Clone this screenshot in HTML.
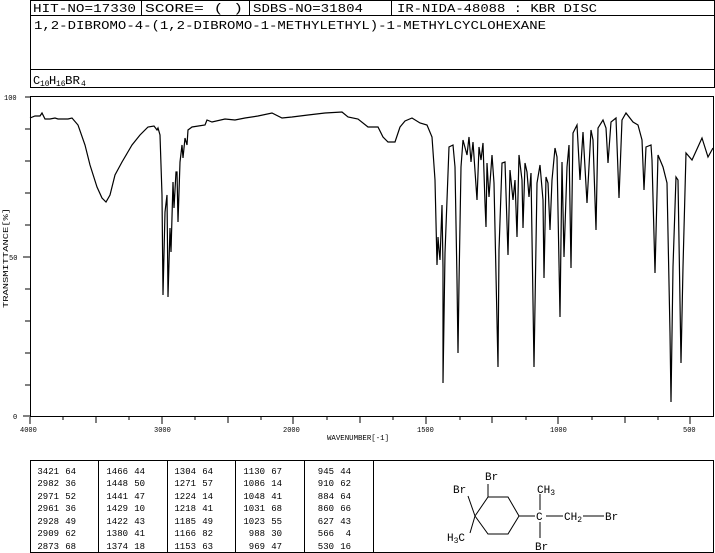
<!DOCTYPE html>
<html><head><meta charset="utf-8"><style>
html,body{margin:0;padding:0;background:#fff;width:715px;height:553px;overflow:hidden}
svg{display:block}
text{font-family:"Liberation Mono",monospace;fill:#000}
</style></head><body>
<svg width="715" height="553" viewBox="0 0 715 553" xmlns="http://www.w3.org/2000/svg">
<g fill="none" stroke="#000" stroke-width="1">
<rect x="30.5" y="0.5" width="684" height="87"/>
<line x1="30" y1="15.5" x2="715" y2="15.5"/>
<line x1="30" y1="69.5" x2="715" y2="69.5"/>
<line x1="141.5" y1="0" x2="141.5" y2="15"/>
<line x1="249.5" y1="0" x2="249.5" y2="15"/>
<line x1="391.5" y1="0" x2="391.5" y2="15"/>
</g>
<g font-size="12">
<text x="33" y="12" textLength="103" lengthAdjust="spacingAndGlyphs">HIT-NO=17330</text>
<text x="145" y="12" textLength="98" lengthAdjust="spacingAndGlyphs">SCORE=  (   )</text>
<text x="253" y="12" textLength="110" lengthAdjust="spacingAndGlyphs">SDBS-NO=31804</text>
<text x="397" y="12" textLength="200" lengthAdjust="spacingAndGlyphs">IR-NIDA-48088 : KBR DISC</text>
<text x="34" y="29" textLength="512" lengthAdjust="spacingAndGlyphs">1,2-DIBROMO-4-(1,2-DIBROMO-1-METHYLETHYL)-1-METHYLCYCLOHEXANE</text>
<text x="33" y="84">C</text><text x="40" y="86" font-size="8">10</text>
<text x="49" y="84">H</text><text x="56" y="86" font-size="8">16</text>
<text x="65" y="84" textLength="15" lengthAdjust="spacingAndGlyphs">BR</text><text x="81" y="86" font-size="8">4</text>
</g>
<g fill="none" stroke="#000" stroke-width="1">
<rect x="30.5" y="96.5" width="683" height="320"/>
<path d="M25 97H30M25 129H30M25 161H30M25 193H30M25 225H30M23 257H30M25 289H30M25 321H30M25 353H30M25 385H30M23 416H30"/>
<path d="M30 417V424M63 417V420M96 417V423M129 417V420M162 417V424M195 417V420M228 417V423M261 417V420M293 417V424M327 417V420M360 417V423M393 417V420M426 417V424M460 417V420M492 417V423M526 417V420M558 417V424M592 417V420M625 417V423M658 417V420M690 417V424"/>
</g>
<g font-size="7">
<text x="4" y="100">100</text><text x="9" y="260">50</text><text x="13" y="419">0</text>
<text x="20" y="432">4000</text><text x="154" y="432">3000</text><text x="283" y="432">2000</text>
<text x="417" y="432">1500</text><text x="550" y="432">1000</text><text x="683" y="432">500</text>
<text x="327" y="440" textLength="62" lengthAdjust="spacingAndGlyphs">WAVENUMBER[-1]</text>
<text transform="translate(8,258) rotate(-90)" text-anchor="middle" textLength="100" lengthAdjust="spacingAndGlyphs">TRANSMITTANCE[%]</text>
</g>
<polyline fill="none" stroke="#000" stroke-width="1.2" points="30,118 35,116 40,116 42,113 45,119 50,119 55,118 58,119 68,119 72,118 78,125 85,145 90,165 97,187 102,198 106,202 110,195 115,175 122,162 132,145 140,135 148,127 154,126 157,130 158,128 160,135 162,195 163,295 165,212 167,195 168,297 170,228 171,252 173,182 174,208 176,172 177,172 178,222 180,162 182,145 183,158 185,138 187,145 188,130 192,127 205,125 207,120 212,122 225,119 235,120 245,118 258,116 272,113 282,118 292,117 308,115 325,113 342,112 348,117 358,119 368,127 378,127 383,137 388,142 395,142 400,127 405,121 412,118 420,123 427,125 432,137 435,180 437,265 438,237 439,250 440,260 442,205 443,267 443,383 445,253 447,200 449,147 453,145 455,167 457,280 458,353 459,283 461,167 463,140 467,155 469,137 471,162 473,142 477,200 479,147 481,160 483,143 485,203 486,227 487,163 489,197 492,155 494,183 498,367 499,250 502,163 505,162 508,255 510,170 513,200 515,180 517,237 519,155 522,180 523,228 525,163 527,172 529,197 531,173 534,367 537,183 540,165 543,200 544,278 546,177 548,183 550,230 552,180 555,148 557,157 560,317 562,162 564,257 567,167 569,145 571,268 573,133 577,125 580,180 583,132 587,203 591,130 593,140 596,230 598,128 603,120 606,128 608,163 611,122 616,118 619,198 622,120 626,113 633,122 638,125 642,140 644,190 646,147 651,145 652,160 655,273 658,155 663,167 667,183 670,333 671,402 673,267 676,177 678,180 681,363 683,267 686,153 692,160 702,138 708,157 713,148"/>
<g fill="none" stroke="#000" stroke-width="1">
<rect x="30.5" y="460.5" width="683" height="92"/>
<line x1="98.5" y1="460" x2="98.5" y2="553"/>
<line x1="167.5" y1="460" x2="167.5" y2="553"/>
<line x1="235.5" y1="460" x2="235.5" y2="553"/>
<line x1="304.5" y1="460" x2="304.5" y2="553"/>
<line x1="373.5" y1="460" x2="373.5" y2="553"/>
</g>
<g font-size="9" text-anchor="end">
<g>
<text x="59" y="474">3421</text><text x="76" y="474">64</text>
<text x="59" y="486">2982</text><text x="76" y="486">36</text>
<text x="59" y="499">2971</text><text x="76" y="499">52</text>
<text x="59" y="511">2961</text><text x="76" y="511">36</text>
<text x="59" y="524">2928</text><text x="76" y="524">49</text>
<text x="59" y="536">2909</text><text x="76" y="536">62</text>
<text x="59" y="549">2873</text><text x="76" y="549">68</text>
</g>
<g transform="translate(69,0)">
<text x="59" y="474">1466</text><text x="76" y="474">44</text>
<text x="59" y="486">1448</text><text x="76" y="486">50</text>
<text x="59" y="499">1441</text><text x="76" y="499">47</text>
<text x="59" y="511">1429</text><text x="76" y="511">10</text>
<text x="59" y="524">1422</text><text x="76" y="524">43</text>
<text x="59" y="536">1380</text><text x="76" y="536">41</text>
<text x="59" y="549">1374</text><text x="76" y="549">18</text>
</g>
<g transform="translate(137,0)">
<text x="59" y="474">1304</text><text x="76" y="474">64</text>
<text x="59" y="486">1271</text><text x="76" y="486">57</text>
<text x="59" y="499">1224</text><text x="76" y="499">14</text>
<text x="59" y="511">1218</text><text x="76" y="511">41</text>
<text x="59" y="524">1185</text><text x="76" y="524">49</text>
<text x="59" y="536">1166</text><text x="76" y="536">82</text>
<text x="59" y="549">1153</text><text x="76" y="549">63</text>
</g>
<g transform="translate(206,0)">
<text x="59" y="474">1130</text><text x="76" y="474">67</text>
<text x="59" y="486">1086</text><text x="76" y="486">14</text>
<text x="59" y="499">1048</text><text x="76" y="499">41</text>
<text x="59" y="511">1031</text><text x="76" y="511">68</text>
<text x="59" y="524">1023</text><text x="76" y="524">55</text>
<text x="59" y="536">988</text><text x="76" y="536">30</text>
<text x="59" y="549">969</text><text x="76" y="549">47</text>
</g>
<g transform="translate(275,0)">
<text x="59" y="474">945</text><text x="76" y="474">44</text>
<text x="59" y="486">910</text><text x="76" y="486">62</text>
<text x="59" y="499">884</text><text x="76" y="499">64</text>
<text x="59" y="511">860</text><text x="76" y="511">66</text>
<text x="59" y="524">627</text><text x="76" y="524">43</text>
<text x="59" y="536">566</text><text x="76" y="536">4</text>
<text x="59" y="549">530</text><text x="76" y="549">16</text>
</g>
</g>
<g fill="none" stroke="#000" stroke-width="1">
<polygon points="475,516 488,497 508,497 519,516 508,534 488,534"/>
<line x1="488" y1="497" x2="488" y2="484"/>
<line x1="468" y1="496" x2="475" y2="516"/>
<line x1="470" y1="533" x2="475" y2="516"/>
<line x1="519" y1="516" x2="535" y2="516"/>
<line x1="540" y1="494" x2="540" y2="510"/>
<line x1="540" y1="522" x2="540" y2="538"/>
<line x1="546" y1="516" x2="563" y2="516"/>
<line x1="583" y1="516" x2="604" y2="516"/>
</g>
<g font-size="11">
<text x="485" y="480">Br</text>
<text x="453" y="493">Br</text>
<text x="537" y="493">CH<tspan font-size="8" dy="2">3</tspan></text>
<text x="536" y="520">C</text>
<text x="564" y="520">CH<tspan font-size="8" dy="2">2</tspan></text>
<text x="605" y="520">Br</text>
<text x="535" y="550">Br</text>
<text x="447" y="541">H<tspan font-size="8" dy="2">3</tspan><tspan dy="-2">C</tspan></text>
</g>
</svg>
</body></html>
